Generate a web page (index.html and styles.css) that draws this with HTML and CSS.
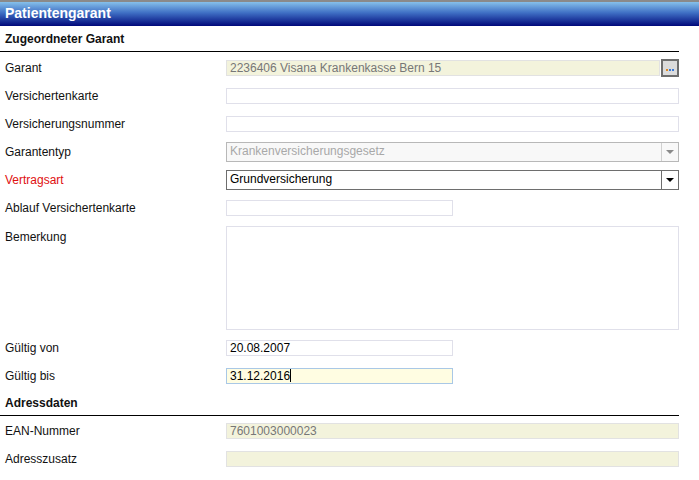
FILE: index.html
```html
<!DOCTYPE html>
<html>
	<head>
		<meta charset="UTF-8">
		<title>Patientengarant</title>
		<link rel="stylesheet" href="styles.css">
	</head>
	<body>
		<div class="titlebar">Patientengarant</div>
		<div class="form">
			<div class="section">Zugeordneter Garant</div>
			<div class="rows first">
				<div class="row">
					<label>Garant</label>
					<div class="lookup">
						<div class="field readonly">2236406 Visana Krankenkasse Bern 15</div>
						<div class="dots"><i class="o"></i><i class="b"></i><i class="b"></i></div>
					</div>
				</div>
				<div class="row">
					<label>Versichertenkarte</label>
					<div class="field"></div>
				</div>
				<div class="row">
					<label>Versicherungsnummer</label>
					<div class="field"></div>
				</div>
				<div class="row">
					<label>Garantentyp</label>
					<div class="select disabled">
						<span class="value">Krankenversicherungsgesetz</span>
						<span class="arrow"></span>
					</div>
				</div>
				<div class="row">
					<label class="required">Vertragsart</label>
					<div class="select">
						<span class="value">Grundversicherung</span>
						<span class="arrow"></span>
					</div>
				</div>
				<div class="row">
					<label>Ablauf Versichertenkarte</label>
					<div class="field short"></div>
				</div>
				<div class="row tall">
					<label>Bemerkung</label>
					<div class="field area"></div>
				</div>
				<div class="row">
					<label>Gültig von</label>
					<div class="field short dark">20.08.2007</div>
				</div>
				<div class="row">
					<label>Gültig bis</label>
					<div class="field short dark focus">31.12.2016<span class="caret"></span></div>
				</div>
			</div>
			<div class="section">Adressdaten</div>
			<div class="rows">
				<div class="row">
					<label>EAN-Nummer</label>
					<div class="field readonly">7601003000023</div>
				</div>
				<div class="row">
					<label>Adresszusatz</label>
					<div class="field readonly"></div>
				</div>
			</div>
		</div>
	</body>
</html>
```

FILE: styles.css
```css
* {
	margin: 0;
	padding: 0;
	box-sizing: border-box;
}
body {
	font-family: "Liberation Sans", Arial, sans-serif;
	font-size: 12px;
	color: #111;
	background: #fff;
}
/* blauer Titelbalken */
.titlebar {
	height: 26px;
	border-top: 2px solid #8a8a8a;
	background: linear-gradient(#86c0ea, #3f6fc4 45%, #00087a);
	color: #fff;
	font-weight: bold;
	font-size: 14px;
	line-height: 23px;
	padding-left: 5px;
}
.form {
	width: 679px;
}
.section {
	height: 26px;
	display: flex;
	align-items: flex-end;
	padding: 0 0 5px 5px;
	font-weight: bold;
	border-bottom: 1px solid #000;
}
.rows.first {
	padding-top: 2px;
}
.rows {
	padding-top: 1px;
}
.row {
	display: grid;
	grid-template-columns: 226px 1fr;
	align-items: center;
	height: 28px;
}
.row.tall {
	height: 112px;
	align-items: start;
}
.row label {
	padding-left: 5px;
	line-height: 14px;
}
.row.tall label {
	padding-top: 8px;
}
.required {
	color: #e01010;
}
.field {
	height: 16px;
	border: 1px solid #e0e0ea;
	background: #fff;
	padding-left: 3px;
	line-height: 14px;
	color: #777;
}
.field.readonly {
	background: #f3f3dc;
	border-color: #e2e2e2;
}
.field.short {
	width: 227px;
}
.field.dark {
	color: #000;
}
.field.focus {
	background: #fffde2;
	border-color: #a9c8e6;
}
.caret {
	display: inline-block;
	width: 1px;
	height: 13px;
	background: #000;
	vertical-align: -2px;
}
.field.area {
	height: 104px;
	margin-top: 4px;
}
.lookup {
	display: flex;
	align-items: center;
}
.lookup .field {
	flex: 1;
	margin-right: 1px;
}
.dots {
	width: 18px;
	height: 18px;
	border: 2px solid #6e6e6e;
	background: #dcdcdc;
	display: flex;
	justify-content: center;
	align-items: flex-end;
	gap: 1px;
	padding-bottom: 4px;
}
.dots i {
	width: 2px;
	height: 2px;
}
.dots .o {
	background: #e08a20;
}
.dots .b {
	background: #3a7ad8;
}
.select {
	height: 20px;
	border: 1px solid #6e6e6e;
	display: flex;
	color: #000;
}
.select .value {
	flex: 1;
	padding-left: 3px;
	line-height: 17px;
}
.select .arrow {
	width: 17px;
	border-left: 1px solid #6e6e6e;
	position: relative;
}
.select .arrow::after {
	content: "";
	position: absolute;
	left: 4px;
	top: 7px;
	border-left: 4px solid transparent;
	border-right: 4px solid transparent;
	border-top: 4px solid #000;
}
.select.disabled {
	border-color: #b8b8b8;
	background: #f8f8f8;
	color: #a8a8a8;
}
.select.disabled .arrow {
	border-left-color: #d0d0d0;
}
.select.disabled .arrow::after {
	border-top-color: #8a8a8a;
}
```
